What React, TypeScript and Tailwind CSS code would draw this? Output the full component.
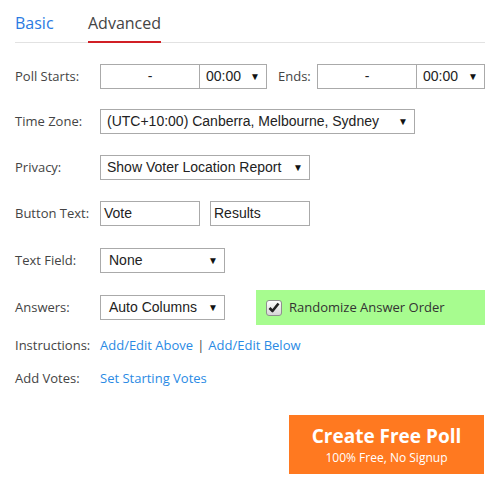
import { ReactNode } from 'react';

function Select({ value, width, padLeft = 'pl-[6px]' }: { value: string; width: string; padLeft?: string }) {
  return (
    <div
      className={`${width} h-[25px] border border-[#aaa] bg-white flex items-center justify-between ${padLeft} pr-[6px] font-['Liberation_Sans',Arial,sans-serif] text-[14px] text-[#222]`}
    >
      <span className="whitespace-nowrap">{value}</span>
      <span className="text-[10px] text-[#111]">▼</span>
    </div>
  );
}

function TextBox({ value, width }: { value: string; width: string }) {
  return (
    <div
      className={`${width} h-[25px] border border-[#aaa] bg-white flex items-center pl-[3px] font-['Liberation_Sans',Arial,sans-serif] text-[14px] text-[#222]`}
    >
      {value}
    </div>
  );
}

function DateBox() {
  return (
    <div className="w-[100px] h-[25px] border border-[#aaa] bg-white flex items-center justify-center font-['Liberation_Sans',Arial,sans-serif] text-[14px] text-[#222]">
      -
    </div>
  );
}

function Row({ label, children, className }: { label: string; children: ReactNode; className: string }) {
  return (
    <div className={`flex items-center ${className}`}>
      <div className="w-[85px] text-[13px] text-[#444] whitespace-nowrap">{label}</div>
      {children}
    </div>
  );
}

export default function App() {
  return (
    <div className="w-[500px] h-[490px] bg-white px-[15px] font-['Open_Sans',sans-serif] overflow-hidden">
      <div className="flex border-b border-[#e2e2e2] pt-[11px]">
        <div className="w-[73px] text-[16px] text-[#2a7ae2] pb-[7px]">Basic</div>
        <div className="text-[16px] text-[#444] pb-[5px] border-b-2 border-[#d11f25] -mb-px">Advanced</div>
      </div>

      <Row label="Poll Starts:" className="mt-[21px]">
        <DateBox />
        <div className="-ml-px">
          <Select value="00:00" width="w-[68px]" />
        </div>
        <div className="ml-[11px] w-[39px] text-[13px] text-[#444]">Ends:</div>
        <DateBox />
        <div className="-ml-px">
          <Select value="00:00" width="w-[69px]" />
        </div>
      </Row>

      <Row label="Time Zone:" className="mt-[20px]">
        <Select value="(UTC+10:00) Canberra, Melbourne, Sydney" width="w-[315px]" />
      </Row>

      <Row label="Privacy:" className="mt-[21px]">
        <Select value="Show Voter Location Report" width="w-[210px]" />
      </Row>

      <Row label="Button Text:" className="mt-[21px]">
        <TextBox value="Vote" width="w-[100px]" />
        <div className="ml-[10px]">
          <TextBox value="Results" width="w-[100px]" />
        </div>
      </Row>

      <Row label="Text Field:" className="mt-[22px]">
        <Select value="None" width="w-[125px]" padLeft="pl-[8px]" />
      </Row>

      <div className="flex items-center mt-[17px]">
        <div className="w-[85px] text-[13px] text-[#444]">Answers:</div>
        <Select value="Auto Columns" width="w-[125px]" padLeft="pl-[8px]" />
        <div className="ml-[31px] w-[229px] h-[35px] bg-[#a7fc8f] flex items-center pl-[10px]">
          <div className="w-[16px] h-[16px] rounded-[3px] border border-[#8f8f8f] bg-gradient-to-b from-[#fdfdfd] to-[#d6d6d6] flex items-center justify-center">
            <svg width="12" height="11" viewBox="0 0 12 11">
              <path d="M1.5 6 L4.5 9 L10.5 1.5" fill="none" stroke="#222" strokeWidth="2.6" strokeLinejoin="round" />
            </svg>
          </div>
          <span className="ml-[7px] text-[13px] text-[#333]">Randomize Answer Order</span>
        </div>
      </div>

      <Row label="Instructions:" className="mt-[11px]">
        <span className="text-[13px] text-[#2a8ae4]">Add/Edit Above</span>
        <span className="text-[13px] text-[#444] mx-[4px]">|</span>
        <span className="text-[13px] text-[#2a8ae4]">Add/Edit Below</span>
      </Row>

      <Row label="Add Votes:" className="mt-[13px]">
        <span className="text-[13px] text-[#2a8ae4]">Set Starting Votes</span>
      </Row>

      <div className="flex justify-end mt-[27px] pr-px">
        <div className="w-[195px] h-[59px] bg-[#ff7920] flex flex-col items-center justify-center text-white">
          <div className="text-[19px] font-bold leading-[24px]">Create Free Poll</div>
          <div className="text-[12px] leading-[16px] mt-[2px]">100% Free, No Signup</div>
        </div>
      </div>
    </div>
  );
}
